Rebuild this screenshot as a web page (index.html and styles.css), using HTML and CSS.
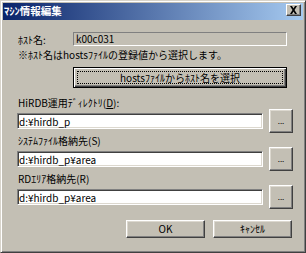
FILE: index.html
```html
<!DOCTYPE html>
<html>
<head>
    <meta charset="utf-8">
    <title>ﾏｼﾝ情報編集</title>
    <link rel="stylesheet" href="styles.css">
</head>
<body>
    <div class="window">
        <!-- title bar -->
        <div class="titlebar">
            <span class="title">ﾏｼﾝ情報編集</span>
            <button class="close" aria-label="close">
                <svg width="9" height="8" viewBox="0 0 9 8">
                    <path d="M1 0h2l1.5 2.5L6 0h2L5.5 4L8 8H6L4.5 5.5L3 8H1l2.5-4z" fill="#000"/>
                </svg>
            </button>
        </div>
        <div class="content">
            <!-- host name -->
            <div class="host-row">
                <span class="host-label">ﾎｽﾄ名:</span>
                <div class="host-field">k00c031</div>
            </div>
            <p class="note">※ﾎｽﾄ名はhostsﾌｧｲﾙの登録値から選択します。</p>
            <button class="btn btn-focus select-btn">
                <span class="focus-ring">hostsﾌｧｲﾙからﾎｽﾄ名を選択</span>
            </button>
            <!-- directory fields -->
            <div class="group">
                <label class="label">HiRDB運用ﾃﾞｨﾚｸﾄﾘ(<u>D</u>):</label>
                <div class="field-row">
                    <input class="path" type="text" value="d:¥hirdb_p" spellcheck="false">
                    <button class="btn browse">...</button>
                </div>
            </div>
            <div class="group">
                <label class="label">ｼｽﾃﾑﾌｧｲﾙ格納先(S)</label>
                <div class="field-row">
                    <input class="path" type="text" value="d:¥hirdb_p¥area" spellcheck="false">
                    <button class="btn browse">...</button>
                </div>
            </div>
            <div class="group">
                <label class="label">RDｴﾘｱ格納先(R)</label>
                <div class="field-row">
                    <input class="path" type="text" value="d:¥hirdb_p¥area" spellcheck="false">
                    <button class="btn browse">...</button>
                </div>
            </div>
            <!-- dialog buttons -->
            <div class="actions">
                <button class="btn action">OK</button>
                <button class="btn action">ｷｬﾝｾﾙ</button>
            </div>
        </div>
    </div>
</body>
</html>
```

FILE: styles.css
```css
* {
    box-sizing: border-box;
}
body {
    margin: 0;
    background-color: #c3bfb4;
    font-family: "Noto Sans CJK JP", "Liberation Sans", sans-serif;
    font-size: 10px;
    color: #000;
}
.window {
    width: 306px;
    height: 253px;
    background-color: #c3bfb4;
    border: 1px solid;
    border-color: #d8d4cb #404040 #404040 #d8d4cb;
    box-shadow: inset 1px 1px #fff, inset -1px -1px #808080;
    padding: 2px;
    display: flex;
    flex-direction: column;
}
.titlebar {
    height: 17px;
    flex-shrink: 0;
    background: linear-gradient(to right, #0a246a, #a6caf0);
    display: flex;
    justify-content: space-between;
    align-items: flex-start;
    padding: 0 2px 0 1px;
}
.title {
    color: #fff;
    font-weight: bold;
    font-size: 10.5px;
    line-height: 16px;
}
.close {
    width: 15px;
    height: 12px;
    margin-top: 1px;
    padding: 0;
    background-color: #c3bfb4;
    border: 1px solid;
    border-color: #fff #404040 #404040 #fff;
    box-shadow: inset -1px -1px #808080;
    display: flex;
    align-items: center;
    justify-content: center;
}
.content {
    padding: 12px 10px 0 14px;
    display: flex;
    flex-direction: column;
}
.host-row {
    display: flex;
    align-items: center;
    height: 14px;
    padding-left: 1px;
    margin-right: 6px;
}
.host-label {
    width: 55px;
    flex-shrink: 0;
}
.host-field {
    flex: 1;
    height: 14px;
    line-height: 12px;
    padding-left: 2px;
    border: 1px solid;
    border-color: #808080 #fff #fff #808080;
}
.note {
    margin: 3px 0 0 1px;
    line-height: 12px;
}
.btn {
    font: inherit;
    color: #000;
    padding: 0;
    background-color: #c3bfb4;
    border: 1px solid;
    border-color: #fff #404040 #404040 #fff;
    box-shadow: inset -1px -1px #808080, inset 1px 1px #dcd8cf;
}
.btn-focus {
    border-color: #000;
    box-shadow: inset 1px 1px #fff, inset -1px -1px #404040, inset -2px -2px #808080;
}
.select-btn {
    height: 21px;
    margin: 6px 6px 0 56px;
    padding: 3px;
    display: flex;
}
.focus-ring {
    flex: 1;
    border: 1px dotted #000;
    line-height: 11px;
    text-align: center;
}
.group {
    margin-top: 2px;
}
.select-btn + .group {
    margin-top: 9px;
}
.label {
    display: block;
    height: 12px;
    line-height: 12px;
    padding-left: 1px;
}
.field-row {
    display: flex;
    align-items: center;
    gap: 6px;
    height: 24px;
}
.path {
    flex: 1;
    min-width: 0;
    height: 16px;
    margin: 0;
    padding: 0 0 0 1px;
    font: inherit;
    color: #000;
    background-color: #fff;
    border: 1px solid;
    border-color: #808080 #fff #fff #808080;
    box-shadow: inset 1px 1px #404040, inset -1px -1px #dcd8cf;
    outline: none;
}
.browse {
    width: 24px;
    height: 24px;
    font-size: 8px;
    line-height: 10px;
}
.actions {
    display: flex;
    justify-content: flex-end;
    gap: 8px;
    margin-top: 11px;
    padding-right: 1px;
}
.action {
    width: 79px;
    height: 18px;
    line-height: 14px;
}
```
